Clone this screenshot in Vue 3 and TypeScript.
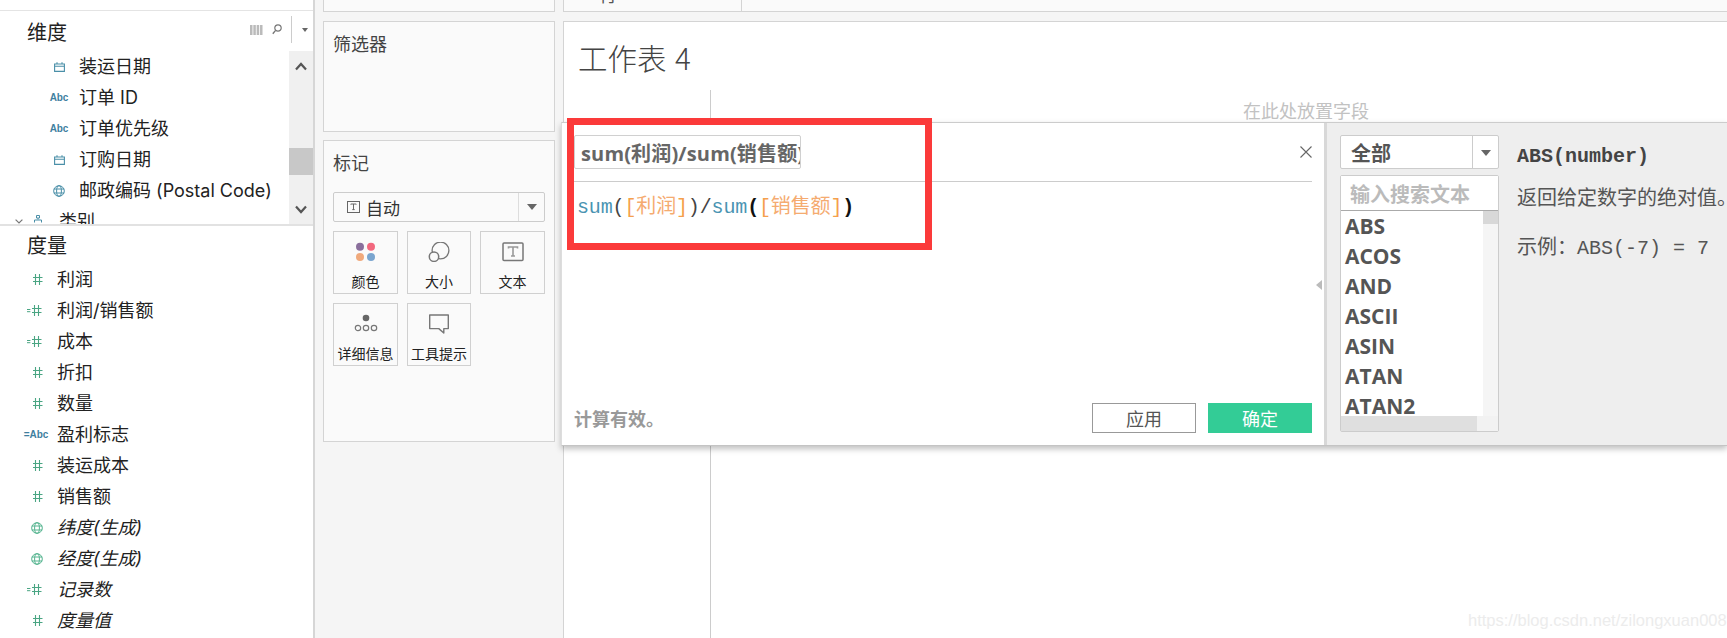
<script setup lang="ts">
type Kind = 'date' | 'abc' | 'geo' | 'hash' | 'calcHash' | 'calcAbc'
interface Field {
  name: string
  kind: Kind
  italic?: boolean
}

const dimensions: Field[] = [
  { name: '装运日期', kind: 'date' },
  { name: '订单 ID', kind: 'abc' },
  { name: '订单优先级', kind: 'abc' },
  { name: '订购日期', kind: 'date' },
  { name: '邮政编码 (Postal Code)', kind: 'geo' },
]

const measures: Field[] = [
  { name: '利润', kind: 'hash' },
  { name: '利润/销售额', kind: 'calcHash' },
  { name: '成本', kind: 'calcHash' },
  { name: '折扣', kind: 'hash' },
  { name: '数量', kind: 'hash' },
  { name: '盈利标志', kind: 'calcAbc' },
  { name: '装运成本', kind: 'hash' },
  { name: '销售额', kind: 'hash' },
  { name: '纬度(生成)', kind: 'geo', italic: true },
  { name: '经度(生成)', kind: 'geo', italic: true },
  { name: '记录数', kind: 'calcHash', italic: true },
  { name: '度量值', kind: 'hash', italic: true },
]

const functions: string[] = ['ABS', 'ACOS', 'AND', 'ASCII', 'ASIN', 'ATAN', 'ATAN2']
const formulaName = 'sum(利润)/sum(销售额)'
</script>

<template>
  <div class="app">
    <aside class="data">
      <div class="data-top"></div>
      <header class="data-head">
        <span class="data-title">维度</span>
        <svg class="tool-grid" width="13" height="10" viewBox="0 0 13 10">
          <path d="M0 1h13M0 3h13M0 5h13M0 7h13M0 9h13" stroke="#777" stroke-width="1" stroke-dasharray="2.5 .84" fill="none" />
        </svg>
        <svg class="tool-search" width="10" height="11" viewBox="0 0 10 11">
          <circle cx="6" cy="4" r="3.2" stroke="#777" stroke-width="1.2" fill="none" />
          <path d="M3.6 6.4 .8 9.8" stroke="#777" stroke-width="1.4" fill="none" />
        </svg>
        <span class="tool-sep"></span>
        <span class="tool-caret"></span>
      </header>
      <div class="dims">
        <ul class="rows dim-rows">
          <li v-for="f in dimensions" :key="f.name" class="row">
            <span class="slot">
              <svg v-if="f.kind === 'date'" width="11" height="10" viewBox="0 0 11 10">
                <path d="M.6 2h9.8v7.4H.6zM.6 4.2h9.8M3 .2V2M8 .2V2" stroke="#4a8fa8" stroke-width="1.1" fill="none" />
              </svg>
              <span v-else-if="f.kind === 'abc'" class="abc">Abc</span>
              <svg v-else width="12" height="12" viewBox="0 0 12 12">
                <g stroke="#4a8fa8" stroke-width="1" fill="none">
                  <circle cx="6" cy="6" r="5.3" />
                  <ellipse cx="6" cy="6" rx="2.4" ry="5.3" />
                  <path d="M.8 4h10.4M.8 8h10.4" />
                </g>
              </svg>
            </span>
            <span>{{ f.name }}</span>
          </li>
          <li class="row group-row">
            <svg width="8" height="5" viewBox="0 0 8 5"><path d="M.6.6 4 4l3.4-3.4" stroke="#777" stroke-width="1.2" fill="none" /></svg>
            <svg class="group-icon" width="8" height="8" viewBox="0 0 8 8">
              <path d="M2.5.5h3v2.5h-3zM4 3v1.5M.5 7.5V5h7v2.5" stroke="#4a8fa8" stroke-width="1" fill="none" />
            </svg>
            <span>类别</span>
          </li>
        </ul>
        <div class="vscroll">
          <div class="vscroll-btn">
            <svg width="12" height="9" viewBox="0 0 12 9"><path d="M1 7.5 6 2l5 5.5" stroke="#555" stroke-width="2.2" fill="none" /></svg>
          </div>
          <div class="vscroll-gap"></div>
          <div class="vscroll-thumb"></div>
          <div class="vscroll-fill"></div>
          <div class="vscroll-btn">
            <svg width="12" height="9" viewBox="0 0 12 9"><path d="M1 1.5 6 7l5-5.5" stroke="#555" stroke-width="2.2" fill="none" /></svg>
          </div>
        </div>
      </div>
      <div class="measure-head">度量</div>
      <ul class="rows measure-rows">
        <li v-for="f in measures" :key="f.name" class="row" :class="{ italic: f.italic }">
          <span class="slot">
            <span v-if="f.kind === 'calcAbc'" class="abc calc-abc">=Abc</span>
            <svg v-else-if="f.kind === 'geo'" width="12" height="12" viewBox="0 0 12 12">
              <g stroke="#55b48f" stroke-width="1" fill="none">
                <circle cx="6" cy="6" r="5.3" />
                <ellipse cx="6" cy="6" rx="2.4" ry="5.3" />
                <path d="M.8 4h10.4M.8 8h10.4" />
              </g>
            </svg>
            <svg v-else class="hash" :class="{ calc: f.kind === 'calcHash' }" width="15" height="11" viewBox="0 0 15 11">
              <path d="M7.5 0v11M11.5 0v11M5 3.5h9.5M5 7.5h9.5" stroke="#4aa583" stroke-width="1.1" fill="none" />
              <path v-if="f.kind === 'calcHash'" d="M0 4.5h3.4M0 6.7h3.4" stroke="#4aa583" stroke-width="1" fill="none" />
            </svg>
          </span>
          <span>{{ f.name }}</span>
        </li>
      </ul>
    </aside>

    <section class="cards">
      <div class="strip"></div>
      <div class="card filter-card">筛选器</div>
      <div class="card marks-card">
        <div class="marks-title">标记</div>
        <div class="mark-select">
          <svg width="13" height="12" viewBox="0 0 13 12">
            <rect x=".5" y=".5" width="12" height="11" fill="none" stroke="#666" />
            <path d="M3.8 3.5V3h5.4v.5M6.5 3v5.6M5.3 8.6h2.4" stroke="#666" fill="none" />
          </svg>
          <span class="mark-select-text">自动</span>
          <span class="mark-select-arrow"></span>
        </div>
        <div class="mark-grid">
          <button class="mark-btn">
            <svg width="22" height="20" viewBox="0 0 22 20">
              <circle cx="5" cy="4.7" r="4" fill="#8a6f9c" />
              <circle cx="16" cy="4.7" r="4" fill="#f2687e" />
              <circle cx="5" cy="15" r="4" fill="#f0a97c" />
              <circle cx="16" cy="15" r="4" fill="#7aa5cf" />
            </svg>
            <span>颜色</span>
          </button>
          <button class="mark-btn">
            <svg width="22" height="20" viewBox="0 0 22 20">
              <circle cx="12.5" cy="8.5" r="8.4" fill="none" stroke="#777" stroke-width="1.3" />
              <circle cx="6" cy="14.7" r="4.7" fill="#fafafa" stroke="#777" stroke-width="1.5" />
            </svg>
            <span>大小</span>
          </button>
          <button class="mark-btn">
            <svg width="22" height="20" viewBox="0 0 22 20">
              <rect x="1" y="1" width="20" height="17.5" rx="1" fill="none" stroke="#777" stroke-width="1.5" />
              <path d="M6.5 6.6V5h9v1.6M11 5v9M9 14h4" stroke="#999" stroke-width="1.6" fill="none" />
            </svg>
            <span>文本</span>
          </button>
          <button class="mark-btn">
            <svg width="24" height="20" viewBox="0 0 24 20">
              <circle cx="12" cy="4" r="3.3" fill="#666" />
              <circle cx="4" cy="14" r="2.7" fill="none" stroke="#777" stroke-width="1.2" />
              <circle cx="12" cy="14" r="2.7" fill="none" stroke="#777" stroke-width="1.2" />
              <circle cx="20" cy="14" r="2.7" fill="none" stroke="#777" stroke-width="1.2" />
            </svg>
            <span>详细信息</span>
          </button>
          <button class="mark-btn">
            <svg width="22" height="20" viewBox="0 0 22 20">
              <path d="M1.7 1h18.6v13.6h-4.5V19l-5-4.4H1.7z" fill="none" stroke="#777" stroke-width="1.4" stroke-linejoin="round" />
            </svg>
            <span>工具提示</span>
          </button>
        </div>
      </div>
    </section>

    <main class="sheet-area">
      <div class="strip sheet-strip">
        <div class="strip-label"><span>行</span></div>
      </div>
      <div class="sheet">
        <h1 class="sheet-title">工作表 4</h1>
        <div class="sheet-body">
          <div class="row-col"></div>
          <div class="drop">在此处放置字段</div>
        </div>
      </div>
    </main>

    <div class="dialog">
      <div class="editor">
        <div class="editor-head">
          <input class="name-input" :value="formulaName" readonly />
          <svg width="12" height="12" viewBox="0 0 12 12"><path d="M.5.5l11 11M11.5.5l-11 11" stroke="#666" stroke-width="1.1" fill="none" /></svg>
        </div>
        <div class="formula">
          <span class="fn">sum</span><span class="par">(</span><span class="br">[</span><span class="ref">利润</span><span class="br">]</span><span class="par">)</span><span class="par">/</span><span class="fn">sum</span><b class="par-b">(</b><span class="br">[</span><span class="ref">销售额</span><span class="br">]</span><b class="par-b">)</b>
        </div>
        <div class="editor-foot">
          <span class="status">计算有效。</span>
          <button class="btn">应用</button>
          <button class="btn primary">确定</button>
        </div>
        <span class="collapse"></span>
      </div>
      <div class="reference">
        <div class="fn-col">
          <div class="fn-select">
            <span class="fn-select-text">全部</span>
            <span class="fn-select-arrow"></span>
          </div>
          <div class="fn-box">
            <input class="fn-search" placeholder="输入搜索文本" />
            <div class="fn-list-wrap">
              <ul class="fn-list">
                <li v-for="n in functions" :key="n">{{ n }}</li>
              </ul>
              <div class="fn-vbar"><div class="fn-vthumb"></div></div>
            </div>
            <div class="fn-hbar"><div class="fn-hthumb"></div></div>
          </div>
        </div>
        <div class="doc">
          <div class="doc-sig">ABS(number)</div>
          <div class="doc-desc">返回给定数字的绝对值。</div>
          <div class="doc-ex">示例：ABS(-7) = 7</div>
        </div>
      </div>
    </div>

    <div class="highlight"></div>
    <div class="watermark">https://blog.csdn.net/zilongxuan008</div>
  </div>
</template>

<style>
html, body { margin: 0; background: #f5f5f5; overflow: hidden; }
</style>

<style scoped>
.app {
  position: relative;
  display: flex;
  width: 1727px;
  height: 638px;
  overflow: hidden;
  background: #f5f5f5;
  color: #222;
  font-family: "Noto Sans CJK SC", "Liberation Sans", sans-serif;
}
ul { list-style: none; margin: 0; padding: 0; }

/* data pane */
.data {
  width: 313px;
  height: 638px;
  flex: none;
  background: #fff;
  border-right: 2px solid #d6d6d6;
  display: flex;
  flex-direction: column;
}
.data-top { height: 10px; border-bottom: 1px solid #e4e4e4; flex: none; }
.data-head {
  height: 40px;
  flex: none;
  display: flex;
  align-items: center;
  padding-left: 27px;
}
.data-title { font-size: 20px; width: 223px; }
.tool-grid { margin-top: -3px; }
.tool-search { margin-left: 9px; margin-top: -3px; }
.tool-sep { width: 1px; height: 27px; background: #ccc; margin-left: 9px; margin-top: -3px; }
.tool-caret {
  width: 0; height: 0; margin-left: 10px; margin-top: -2px;
  border-left: 3.5px solid transparent; border-right: 3.5px solid transparent; border-top: 4px solid #666;
}
.dims { height: 173px; flex: none; display: flex; border-bottom: 2px solid #e2e2e2; }
.dim-rows { width: 289px; overflow: hidden; flex: none; }
.row {
  display: flex;
  align-items: center;
  height: 31px;
  font-family: "Inter", "Noto Sans CJK SC", sans-serif;
  font-size: 18px;
  line-height: 31px;
  white-space: nowrap;
}
.slot { width: 30px; flex: none; margin-right: 5px; display: flex; align-items: center; justify-content: center; }
.dim-rows .row { padding-left: 44px; }
.dim-rows .group-row { padding-left: 15px; }
.group-icon { margin-left: 11px; margin-right: 17px; margin-top: -6px; }
.abc { font-family: "Liberation Sans", sans-serif; font-size: 10px; color: #3f7f9f; font-weight: 700; letter-spacing: -.1px; }
.calc-abc { margin-left: -2px; }
.hash.calc { margin-left: -7px; margin-right: -1px; }
.hash:not(.calc) { margin-left: -3px; }
.italic { font-style: italic; }
.vscroll { width: 24px; flex: none; background: #f0f0f0; display: flex; flex-direction: column; }
.vscroll-btn { height: 30px; flex: none; display: flex; align-items: center; justify-content: center; }
.vscroll-gap { height: 67px; flex: none; }
.vscroll-thumb { height: 27px; flex: none; background: #c8c8c8; }
.vscroll-fill { flex: 1; }
.measure-head { height: 38px; flex: none; line-height: 38px; font-size: 20px; padding-left: 27px; }
.measure-rows .row { padding-left: 22px; }

/* filter & marks */
.cards { width: 232px; flex: none; margin-left: 8px; display: flex; flex-direction: column; }
.strip { height: 12px; flex: none; border: 1px solid #d4d4d4; border-top: 0; background: #fafafa; box-sizing: border-box; overflow: hidden; }
.card { background: #fafafa; border: 1px solid #d4d4d4; box-sizing: border-box; }
.filter-card { height: 111px; margin-top: 9px; padding: 8px 9px; font-size: 18px; line-height: 27px; color: #444; }
.marks-card { height: 302px; margin-top: 8px; padding: 8px 9px; color: #444; }
.marks-title { font-size: 18px; line-height: 27px; }
.mark-select {
  margin-top: 16px;
  height: 30px;
  box-sizing: border-box;
  width: 212px;
  border: 1px solid #ccc;
  border-radius: 2px;
  display: flex;
  align-items: center;
  padding-left: 13px;
}
.mark-select-text { font-size: 17px; margin-left: 6px; flex: 1; color: #333; }
.mark-select-arrow {
  width: 26px; height: 28px; border-left: 1px solid #ddd; box-sizing: border-box; position: relative;
}
.mark-select-arrow::after {
  content: ""; position: absolute; left: 8px; top: 11px;
  border-left: 5px solid transparent; border-right: 5px solid transparent; border-top: 6px solid #666;
}
.mark-grid {
  margin-top: 9px;
  display: grid;
  grid-template-columns: 65px 64px 65px;
  grid-auto-rows: 63px;
  gap: 9px;
}
.mark-btn {
  box-sizing: border-box;
  border: 1px solid #d0d0d0;
  background: #fafafa;
  padding: 10px 0 0;
  margin: 0;
  display: flex;
  flex-direction: column;
  align-items: center;
  font-family: inherit;
  font-size: 14px;
  color: #222;
  white-space: nowrap;
}
.mark-btn span { margin-top: 8px; line-height: 22px; }

/* sheet */
.sheet-area { flex: 1; min-width: 0; margin-left: 8px; display: flex; flex-direction: column; }
.sheet-strip { border-right: 0; }
.strip-label { width: 178px; height: 12px; box-sizing: border-box; border-right: 1px solid #d4d4d4; padding-left: 35px; overflow: hidden; }
.strip-label span { display: block; font-size: 18px; line-height: 20px; margin-top: -16px; color: #555; }
.sheet { margin-top: 9px; flex: 1; background: #fff; border: 1px solid #d4d4d4; border-right: 0; border-bottom: 0; display: flex; flex-direction: column; }
.sheet-title {
  margin: 0;
  height: 68px;
  flex: none;
  padding-left: 14px;
  font-size: 29.5px;
  font-weight: 300;
  line-height: 70px;
  word-spacing: 2px;
  color: #444;
}
.sheet-body { flex: 1; display: flex; }
.row-col { width: 146px; flex: none; border-right: 1px solid #ccc; }
.drop { padding-left: 532px; font-size: 18px; line-height: 40px; color: #c2c2c2; white-space: nowrap; }

/* calculation dialog */
.dialog {
  position: absolute;
  left: 561px;
  top: 122px;
  width: 1166px;
  height: 324px;
  box-sizing: border-box;
  display: flex;
  background: #fff;
  border-top: 1px solid #ccc;
  border-left: 1px solid #ddd;
  border-bottom: 1px solid #c4c4c4;
  box-shadow: 0 3px 6px rgba(0, 0, 0, .25);
}
.editor {
  position: relative;
  width: 765px;
  flex: none;
  box-sizing: border-box;
  padding: 12px 12px 12px;
  border-right: 3px solid #d8d8d8;
  display: flex;
  flex-direction: column;
}
.editor-head {
  height: 47px;
  flex: none;
  box-sizing: border-box;
  padding-bottom: 12px;
  border-bottom: 1px solid #ccc;
  display: flex;
  align-items: center;
  justify-content: space-between;
}
.name-input {
  width: 227px;
  height: 34px;
  box-sizing: border-box;
  border: 1px solid #d0d0d0;
  border-radius: 2px;
  padding: 0 0 0 6px;
  outline: none;
  font-family: "Open Sans", "Noto Sans CJK SC", sans-serif;
  font-weight: 700;
  font-size: 20px;
  letter-spacing: .15px;
  color: #666;
}
.formula {
  margin-top: 11px;
  padding-left: 3px;
  height: 30px;
  line-height: 30px;
  font-family: "Liberation Mono", "Noto Sans CJK SC", monospace;
  font-size: 20px;
  letter-spacing: -.15px;
  white-space: nowrap;
}
.fn { color: #4a94b2; }
.par { color: #444; }
.par-b { color: #111; }
.br { color: #f5a04c; }
.ref { color: #f5ab70; }
.editor-foot { margin-top: auto; display: flex; align-items: center; gap: 12px; }
.status { flex: 1; font-size: 18px; line-height: 26px; font-weight: 700; color: #999; }
.btn {
  width: 104px;
  height: 30px;
  box-sizing: border-box;
  border: 1px solid #999;
  background: #fff;
  color: #555;
  font-family: inherit;
  font-size: 18px;
  line-height: 26px;
  padding: 0;
}
.btn.primary { background: #33cc96; border-color: #33cc96; color: #fff; }
.collapse {
  position: absolute;
  right: 2px;
  top: 157px;
  border-top: 5px solid transparent;
  border-bottom: 5px solid transparent;
  border-right: 6px solid #bbb;
}
.reference { flex: 1; background: #eee; padding: 12px 0 0 13px; display: flex; gap: 18px; min-width: 0; }
.fn-col { width: 159px; flex: none; }
.fn-select {
  height: 34px;
  box-sizing: border-box;
  border: 1px solid #ccc;
  border-radius: 2px;
  background: #fff;
  display: flex;
  align-items: center;
}
.fn-select-text { flex: 1; padding-left: 10px; font-size: 20px; font-weight: 700; color: #555; }
.fn-select-arrow { width: 26px; height: 32px; box-sizing: border-box; border-left: 1px solid #ccc; position: relative; }
.fn-select-arrow::after {
  content: ""; position: absolute; left: 8px; top: 14px;
  border-left: 5px solid transparent; border-right: 5px solid transparent; border-top: 6px solid #666;
}
.fn-box { margin-top: 6px; height: 257px; box-sizing: border-box; border: 1px solid #ccc; border-radius: 2px; background: #fff; display: flex; flex-direction: column; }
.fn-search {
  height: 35px;
  flex: none;
  box-sizing: border-box;
  border: 0;
  border-bottom: 1px solid #aaa;
  outline: none;
  padding: 0 0 0 9px;
  width: 100%;
  font-family: inherit;
  font-size: 20px;
  font-weight: 700;
  color: #555;
}
.fn-search::placeholder { color: #bbb; opacity: 1; }
.fn-list-wrap { flex: 1; min-height: 0; display: flex; overflow: hidden; }
.fn-list {
  flex: 1;
  overflow: hidden;
  padding: 0 0 0 4px;
  font-family: "Open Sans", "Liberation Sans", sans-serif;
  font-weight: 700;
  font-size: 21px;
  line-height: 30px;
  color: #555;
}
.fn-vbar { width: 15px; flex: none; background: #f5f5f5; }
.fn-vthumb { height: 13px; background: #d8d8d8; }
.fn-hbar { height: 15px; flex: none; background: #f2f2f2; }
.fn-hthumb { width: 136px; height: 15px; background: #dfdfdf; }
.doc { flex: 1; min-width: 0; padding-top: 7px; color: #444; white-space: nowrap; }
.doc-sig { font-family: "Liberation Mono", monospace; font-weight: 700; font-size: 20px; line-height: 30px; }
.doc-desc { margin-top: 10px; font-size: 20px; line-height: 30px; color: #555; }
.doc-ex { margin-top: 22px; font-family: "Liberation Mono", "Noto Sans CJK SC", monospace; font-size: 20px; line-height: 30px; color: #555; }

/* overlays */
.highlight { position: absolute; left: 567px; top: 118px; width: 365px; height: 132px; box-sizing: border-box; border: 7px solid #fb3a3a; pointer-events: none; }
.watermark { position: absolute; left: 1468px; top: 610px; font-family: "Liberation Sans", sans-serif; font-size: 16.5px; line-height: 20px; color: #ececec; white-space: nowrap; }
</style>
